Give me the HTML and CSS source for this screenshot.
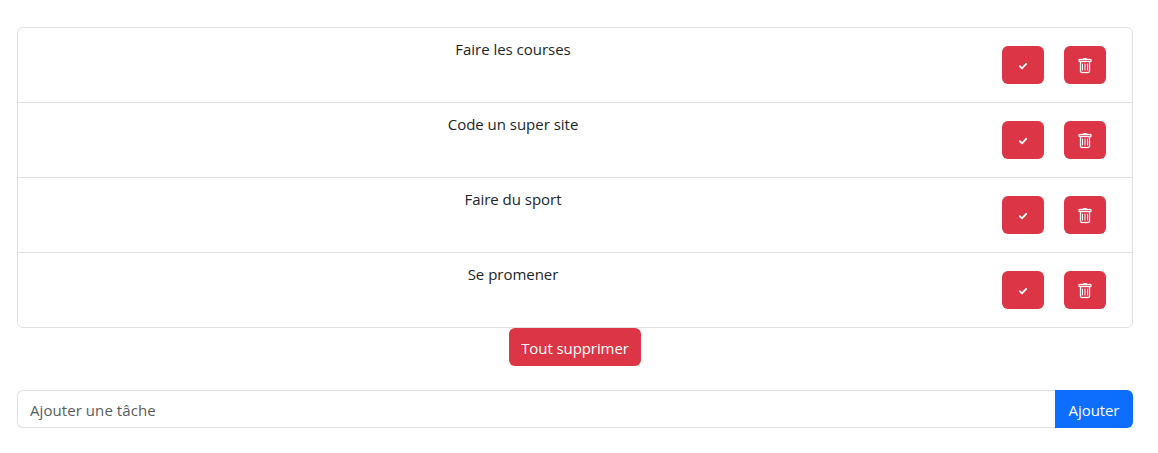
FILE: index.html
```
<!DOCTYPE html>
<html lang="fr">
  <head>
    <meta charset="UTF-8" />
    <meta name="viewport" content="width=device-width, initial-scale=1.0" />
    <title>Liste de tâches</title>
    <link rel="stylesheet" href="styles.css" />
  </head>
  <body>
    <!-- icônes réutilisées dans chaque ligne -->
    <svg class="icon-symbols">
      <symbol id="check" viewBox="0 0 16 16">
        <polyline points="4.8 8.2 7 10.4 11.2 5.8" fill="none" stroke="currentColor" stroke-width="1.8" stroke-linecap="round" stroke-linejoin="round" />
      </symbol>
      <symbol id="trash" viewBox="0 0 16 16">
        <path d="M5.5 5.5A.5.5 0 0 1 6 6v6a.5.5 0 0 1-1 0V6a.5.5 0 0 1 .5-.5m2.5 0a.5.5 0 0 1 .5.5v6a.5.5 0 0 1-1 0V6a.5.5 0 0 1 .5-.5m3 .5a.5.5 0 0 0-1 0v6a.5.5 0 0 0 1 0z" />
        <path stroke="currentColor" stroke-width="0.3" d="M14.5 3a1 1 0 0 1-1 1H13v9a2 2 0 0 1-2 2H5a2 2 0 0 1-2-2V4h-.5a1 1 0 0 1-1-1V2a1 1 0 0 1 1-1H6a1 1 0 0 1 1-1h2a1 1 0 0 1 1 1h3.5a1 1 0 0 1 1 1zM4.118 4 4 4.059V13a1 1 0 0 0 1 1h6a1 1 0 0 0 1-1V4.059L11.882 4zM2.5 3h11V2h-11z" />
      </symbol>
    </svg>

    <div class="todo">
      <ul class="list-group">
        <li class="list-item">
          <span class="task">Faire les courses</span>
          <button class="btn btn-danger btn-icon" aria-label="Valider"><svg class="icon"><use href="#check"></use></svg></button>
          <button class="btn btn-danger btn-icon" aria-label="Supprimer"><svg class="icon"><use href="#trash"></use></svg></button>
        </li>
        <li class="list-item">
          <span class="task">Code un super site</span>
          <button class="btn btn-danger btn-icon" aria-label="Valider"><svg class="icon"><use href="#check"></use></svg></button>
          <button class="btn btn-danger btn-icon" aria-label="Supprimer"><svg class="icon"><use href="#trash"></use></svg></button>
        </li>
        <li class="list-item">
          <span class="task">Faire du sport</span>
          <button class="btn btn-danger btn-icon" aria-label="Valider"><svg class="icon"><use href="#check"></use></svg></button>
          <button class="btn btn-danger btn-icon" aria-label="Supprimer"><svg class="icon"><use href="#trash"></use></svg></button>
        </li>
        <li class="list-item">
          <span class="task">Se promener</span>
          <button class="btn btn-danger btn-icon" aria-label="Valider"><svg class="icon"><use href="#check"></use></svg></button>
          <button class="btn btn-danger btn-icon" aria-label="Supprimer"><svg class="icon"><use href="#trash"></use></svg></button>
        </li>
      </ul>
      <button class="btn btn-danger btn-clear">Tout supprimer</button>
      <form class="input-group">
        <input class="input" type="text" placeholder="Ajouter une tâche" />
        <button class="btn btn-primary" type="button">Ajouter</button>
      </form>
    </div>
  </body>
</html>
```
FILE: styles.css
```
* {
  box-sizing: border-box;
}

body {
  margin: 0;
  background: #fff;
  color: #212529;
  font-family: "Segoe UI", "Open Sans", "Noto Sans", sans-serif;
  font-size: 15px;
  line-height: 24px;
}

.icon-symbols {
  position: absolute;
  width: 0;
  height: 0;
}

.todo {
  display: flex;
  flex-direction: column;
  padding: 27px 25px 0 17px;
}

.list-group {
  margin: 0;
  padding: 0;
  list-style: none;
  border: 1px solid #dee2e6;
  border-radius: 6px;
}

.list-item {
  display: flex;
  padding: 8px 16px;
}

.list-item:not(:last-child) {
  border-bottom: 1px solid #dee2e6;
}

.task {
  flex: 1;
  padding-top: 1px;
  text-align: center;
  letter-spacing: -0.02px;
}

/* boutons */
.btn {
  height: 38px;
  padding: 2px 0 0;
  border: 0;
  border-radius: 6px;
  color: #fff;
  font: inherit;
  letter-spacing: -0.08px;
}

.btn-danger {
  background: #dc3545;
}

.btn-icon {
  display: flex;
  justify-content: center;
  align-items: center;
  width: 42px;
  margin: 10px;
}

.btn-clear {
  align-self: center;
  width: 132px;
}

.btn-primary {
  width: 78px;
  border-radius: 0 6px 6px 0;
  background: #0d6efd;
}

.icon {
  width: 16px;
  height: 16px;
  fill: currentColor;
}

/* ajout d'une tâche */
.input-group {
  display: flex;
  margin-top: 24px;
}

.input {
  flex: 1;
  height: 38px;
  padding: 2px 12px 0;
  border: 1px solid #dee2e6;
  border-right: 0;
  border-radius: 6px 0 0 6px;
  font: inherit;
  letter-spacing: 0.07px;
}

.input::placeholder {
  color: #595c5f;
}
```
